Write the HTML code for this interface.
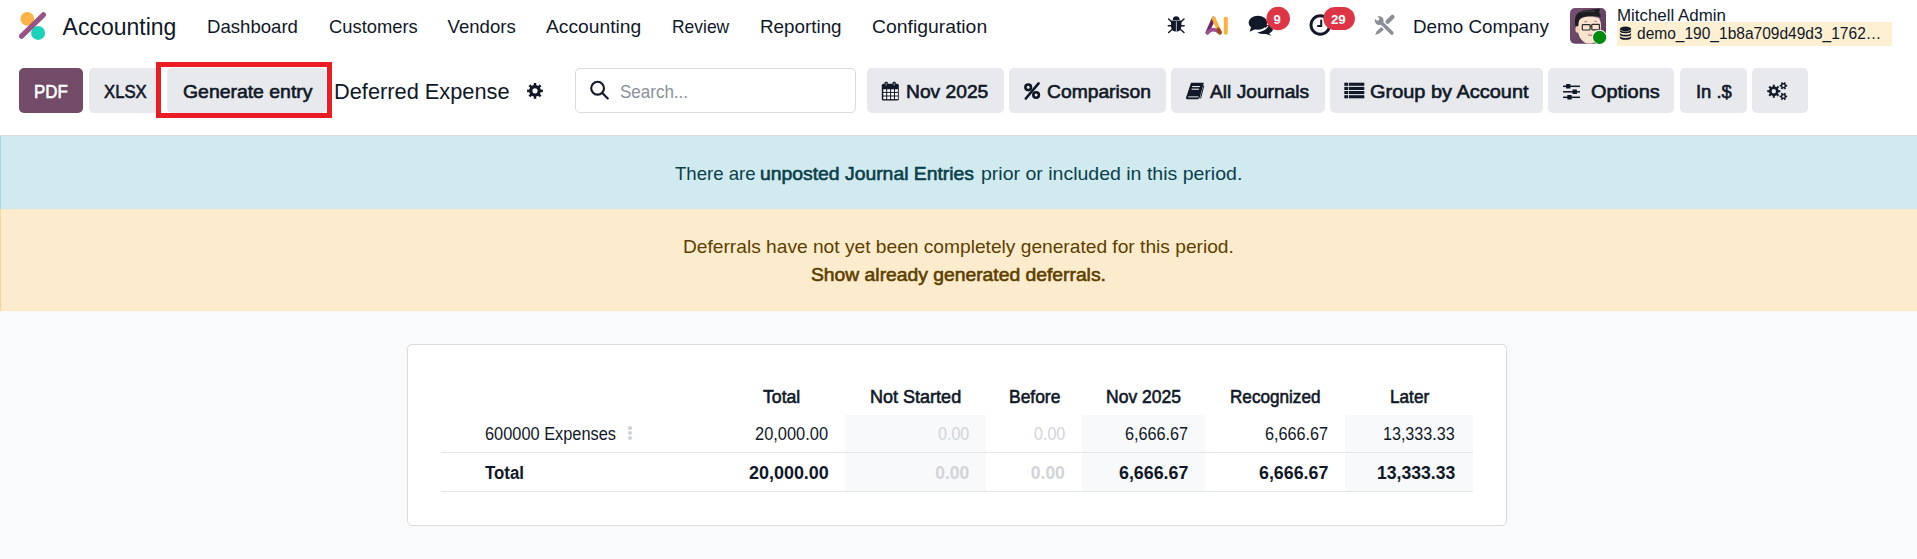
<!DOCTYPE html>
<html><head><meta charset="utf-8"><style>
html,body{margin:0;padding:0;width:1917px;height:559px;overflow:hidden;background:#fff;}
body{position:relative;font-family:"Liberation Sans",sans-serif;}
.bg{position:absolute;}
.t{position:absolute;white-space:nowrap;line-height:1;transform-origin:0 0;}
svg.bg{overflow:visible}
</style></head><body>
<div class="bg" style="left:0;top:0;width:1917px;height:135px;background:#fff"></div>
<div class="bg" style="left:0;top:135px;width:1917px;height:1px;background:#d8dadd"></div>
<div class="bg" style="left:0;top:136px;width:1917px;height:73px;background:#d1eaf0;border-left:1px solid #a2d8e3;box-sizing:border-box"></div>
<div class="bg" style="left:0;top:209px;width:1917px;height:102px;background:#fcebcc;border-left:1px solid #f5d79a;box-sizing:border-box"></div>
<div class="bg" style="left:0;top:311px;width:1917px;height:248px;background:#f9fafb"></div>
<div class="bg" style="left:1px;top:208px;width:1916px;height:1px;background:#cbe9f2"></div>
<div class="bg" style="left:1px;top:209px;width:1916px;height:1px;background:#fde8c6"></div>
<div class="bg" style="left:1px;top:310px;width:1916px;height:1px;background:#fde8c6"></div>
<svg class="bg" style="left:0;top:0" width="60" height="50" viewBox="0 0 60 50">
<circle cx="27.3" cy="18.8" r="6.9" fill="#fbb445"/>
<circle cx="38.1" cy="32.9" r="7" fill="#1ad3bb"/>
<line x1="21.6" y1="36.2" x2="43.4" y2="14.8" stroke="#93497f" stroke-width="5.2" stroke-linecap="round" opacity="0.95"/>
</svg>
<div class="t" style="left:62.60px;top:16.33px;font-size:23px;color:#111827;">Accounting</div>
<div class="t" style="left:207.00px;top:17.85px;font-size:18.6px;color:#111827;">Dashboard</div>
<div class="t" style="left:328.60px;top:17.85px;font-size:18.6px;color:#111827;transform:scaleX(0.9875);">Customers</div>
<div class="t" style="left:447.50px;top:17.85px;font-size:18.6px;color:#111827;">Vendors</div>
<div class="t" style="left:545.50px;top:17.85px;font-size:18.6px;color:#111827;transform:scaleX(1.0344);">Accounting</div>
<div class="t" style="left:672.00px;top:17.85px;font-size:18.6px;color:#111827;transform:scaleX(0.9379);">Review</div>
<div class="t" style="left:759.70px;top:17.85px;font-size:18.6px;color:#111827;transform:scaleX(1.0118);">Reporting</div>
<div class="t" style="left:872.00px;top:17.85px;font-size:18.6px;color:#111827;transform:scaleX(1.0412);">Configuration</div>
<div class="t" style="left:1413.20px;top:18.15px;font-size:18.6px;color:#111827;transform:scaleX(1.0120);">Demo Company</div>
<div class="t" style="left:1617.40px;top:8.08px;font-size:16.8px;color:#111827;transform:scaleX(1.0064);">Mitchell Admin</div>
<div class="bg" style="left:1617px;top:22px;width:275px;height:23.5px;background:#fcefd2"></div>
<div class="t" style="left:1636.70px;top:26.25px;font-size:16px;color:#111827;transform:scaleX(0.9702);">demo_190_1b8a709d49d3_1762…</div>
<div class="bg" style="left:19px;top:68px;width:64px;height:45px;background:#714b67;border-radius:5px"></div>
<div class="bg" style="left:89px;top:68px;width:72px;height:45px;background:#e7e9ed;border-radius:5px"></div>
<div class="bg" style="left:167px;top:68px;width:159px;height:45px;background:#e7e9ed;border-radius:5px"></div>
<div class="bg" style="left:867px;top:68px;width:137px;height:45px;background:#e7e9ed;border-radius:5px"></div>
<div class="bg" style="left:1009px;top:68px;width:157px;height:45px;background:#e7e9ed;border-radius:5px"></div>
<div class="bg" style="left:1171px;top:68px;width:154px;height:45px;background:#e7e9ed;border-radius:5px"></div>
<div class="bg" style="left:1330px;top:68px;width:213px;height:45px;background:#e7e9ed;border-radius:5px"></div>
<div class="bg" style="left:1548px;top:68px;width:126px;height:45px;background:#e7e9ed;border-radius:5px"></div>
<div class="bg" style="left:1680px;top:68px;width:67px;height:45px;background:#e7e9ed;border-radius:5px"></div>
<div class="bg" style="left:1752px;top:68px;width:56px;height:45px;background:#e7e9ed;border-radius:5px"></div>
<div class="bg" style="left:156px;top:62px;width:176px;height:56px;border:5px solid #ec1c24;box-sizing:border-box"></div>
<div class="t" style="left:33.50px;top:82.95px;font-size:18.6px;-webkit-text-stroke:0.6px #ffffff;color:#ffffff;transform:scaleX(0.9086);">PDF</div>
<div class="t" style="left:104.10px;top:82.75px;font-size:18.6px;-webkit-text-stroke:0.6px #111827;color:#111827;transform:scaleX(0.8998);">XLSX</div>
<div class="t" style="left:183.10px;top:82.95px;font-size:18.6px;-webkit-text-stroke:0.6px #111827;color:#111827;transform:scaleX(1.0437);">Generate entry</div>
<div class="t" style="left:334.40px;top:80.65px;font-size:22.5px;color:#111827;transform:scaleX(0.9683);">Deferred Expense</div>
<div class="bg" style="left:575px;top:68px;width:281px;height:45px;border:1px solid #d8dadd;border-radius:5px;box-sizing:border-box;background:#fff"></div>
<div class="t" style="left:620.00px;top:83.04px;font-size:18.5px;color:#8b919b;transform:scaleX(0.9185);">Search...</div>
<div class="t" style="left:905.90px;top:83.15px;font-size:18.6px;-webkit-text-stroke:0.6px #111827;color:#111827;transform:scaleX(1.0336);">Nov 2025</div>
<div class="t" style="left:1046.60px;top:83.15px;font-size:18.6px;-webkit-text-stroke:0.6px #111827;color:#111827;transform:scaleX(1.0361);">Comparison</div>
<div class="t" style="left:1210.00px;top:83.15px;font-size:18.6px;-webkit-text-stroke:0.6px #111827;color:#111827;transform:scaleX(1.0318);">All Journals</div>
<div class="t" style="left:1369.70px;top:83.15px;font-size:18.6px;-webkit-text-stroke:0.6px #111827;color:#111827;transform:scaleX(1.0726);">Group by Account</div>
<div class="t" style="left:1590.80px;top:83.15px;font-size:18.6px;-webkit-text-stroke:0.6px #111827;color:#111827;transform:scaleX(1.0717);">Options</div>
<div class="t" style="left:1695.60px;top:83.15px;font-size:18.6px;-webkit-text-stroke:0.6px #111827;color:#111827;transform:scaleX(0.9892);">In .$</div>
<div class="t" style="left:675.00px;top:165.05px;font-size:18.6px;color:#0a4049;">There are </div>
<div class="t" style="left:759.80px;top:165.05px;font-size:18.6px;-webkit-text-stroke:0.6px #0a4049;color:#0a4049;transform:scaleX(1.0405);">unposted Journal Entries</div>
<div class="t" style="left:981.10px;top:165.05px;font-size:18.6px;color:#0a4049;transform:scaleX(1.0491);">prior or included in this period.</div>
<div class="t" style="left:683.00px;top:238.05px;font-size:18.6px;color:#5c3f00;transform:scaleX(1.0308);">Deferrals have not yet been completely generated for this period.</div>
<div class="t" style="left:810.70px;top:266.45px;font-size:18.6px;-webkit-text-stroke:0.6px #5c3f00;color:#5c3f00;transform:scaleX(1.0375);">Show already generated deferrals.</div>
<div class="bg" style="left:407px;top:344px;width:1100px;height:182px;background:#fff;border:1px solid #d8dadd;border-radius:5px;box-sizing:border-box"></div>
<div class="bg" style="left:845px;top:415px;width:141px;height:76px;background:#f8f9fa"></div>
<div class="bg" style="left:1082px;top:415px;width:123px;height:76px;background:#f8f9fa"></div>
<div class="bg" style="left:1345px;top:415px;width:128px;height:76px;background:#f8f9fa"></div>
<div class="bg" style="left:441px;top:452px;width:1032px;height:1px;background:#e2e5e9"></div>
<div class="bg" style="left:441px;top:491px;width:1032px;height:1px;background:#e2e5e9"></div>
<div class="t" style="left:763.35px;top:387.85px;font-size:18.6px;-webkit-text-stroke:0.6px #111827;color:#111827;transform:scaleX(0.9494);">Total</div>
<div class="t" style="left:870.40px;top:387.85px;font-size:18.6px;-webkit-text-stroke:0.6px #111827;color:#111827;transform:scaleX(0.9694);">Not Started</div>
<div class="t" style="left:1008.60px;top:387.85px;font-size:18.6px;-webkit-text-stroke:0.6px #111827;color:#111827;transform:scaleX(0.9379);">Before</div>
<div class="t" style="left:1106.30px;top:387.85px;font-size:18.6px;-webkit-text-stroke:0.6px #111827;color:#111827;transform:scaleX(0.9419);">Nov 2025</div>
<div class="t" style="left:1230.25px;top:387.85px;font-size:18.6px;-webkit-text-stroke:0.6px #111827;color:#111827;transform:scaleX(0.9213);">Recognized</div>
<div class="t" style="left:1390.00px;top:387.85px;font-size:18.6px;-webkit-text-stroke:0.6px #111827;color:#111827;transform:scaleX(0.9246);">Later</div>
<div class="t" style="left:485.40px;top:425.98px;font-size:17.5px;color:#111827;transform:scaleX(0.9349);">600000 Expenses</div>
<svg class="bg" style="left:0;top:0" width="1917" height="559"><g fill="#ced2d8"><circle cx="630" cy="427.9" r="2"/><circle cx="630" cy="432.9" r="2"/><circle cx="630" cy="437.9" r="2"/></g></svg>
<div class="t" style="left:485.40px;top:464.68px;font-size:17.5px;font-weight:700;color:#111827;transform:scaleX(0.9629);">Total</div>
<div class="t" style="left:755.40px;top:425.98px;font-size:17.5px;color:#111827;transform:scaleX(0.9389);">20,000.00</div>
<div class="t" style="left:938.10px;top:425.98px;font-size:17.5px;color:#d1d4d9;transform:scaleX(0.9189);">0.00</div>
<div class="t" style="left:1033.70px;top:425.98px;font-size:17.5px;color:#d1d4d9;transform:scaleX(0.9189);">0.00</div>
<div class="t" style="left:1124.90px;top:425.98px;font-size:17.5px;color:#111827;transform:scaleX(0.9263);">6,666.67</div>
<div class="t" style="left:1265.40px;top:425.98px;font-size:17.5px;color:#111827;transform:scaleX(0.9263);">6,666.67</div>
<div class="t" style="left:1383.40px;top:425.98px;font-size:17.5px;color:#111827;transform:scaleX(0.9197);">13,333.33</div>
<div class="t" style="left:748.70px;top:464.68px;font-size:17.5px;font-weight:700;color:#111827;transform:scaleX(1.0250);">20,000.00</div>
<div class="t" style="left:935.20px;top:464.68px;font-size:17.5px;font-weight:700;color:#d1d4d9;">0.00</div>
<div class="t" style="left:1030.80px;top:464.68px;font-size:17.5px;font-weight:700;color:#d1d4d9;">0.00</div>
<div class="t" style="left:1118.60px;top:464.68px;font-size:17.5px;font-weight:700;color:#111827;transform:scaleX(1.0188);">6,666.67</div>
<div class="t" style="left:1259.10px;top:464.68px;font-size:17.5px;font-weight:700;color:#111827;transform:scaleX(1.0188);">6,666.67</div>
<div class="t" style="left:1376.70px;top:464.68px;font-size:17.5px;font-weight:700;color:#111827;transform:scaleX(1.0057);">13,333.33</div>
<svg class="bg" style="left:0;top:0" width="1917" height="559" viewBox="0 0 1917 559"><g fill="#111827">
<path d="M1172.8,19.9 A3.4,3.6 0 0 1 1179.6,19.9 Z"/>
<path d="M1171,20.6 H1181.4 V26 Q1181.4,31.5 1176.2,31.6 Q1171,31.5 1171,26 Z"/>
</g>
<rect x="1175.9" y="21.3" width="0.75" height="9.8" fill="#e8eaee"/>
<g stroke="#111827" stroke-width="1.4" stroke-linecap="round">
<line x1="1168.6" y1="19" x2="1171.8" y2="22"/><line x1="1184" y1="19" x2="1180.8" y2="22"/>
<line x1="1168.3" y1="25.7" x2="1171.5" y2="25.7"/><line x1="1184.2" y1="25.7" x2="1181" y2="25.7"/>
<line x1="1168.6" y1="32.6" x2="1172" y2="29.6"/><line x1="1184" y1="32.6" x2="1180.6" y2="29.6"/>
</g>
<g stroke-linecap="round" fill="none" stroke-width="3.8">
<line x1="1213.6" y1="18.4" x2="1207.4" y2="32.5" stroke="#6f2864"/>
<path d="M1207.4,32.6 Q1213.5,26.5 1219.6,32.6" stroke="#9b5190"/>
<line x1="1213.6" y1="18.4" x2="1220" y2="32.5" stroke="#fbb13c"/>
<line x1="1218.2" y1="29.5" x2="1220" y2="32.5" stroke="#a0421c"/>
<line x1="1225.8" y1="18.6" x2="1225.8" y2="32.8" stroke="#fbb13c" stroke-width="4.0"/>
</g>
<path fill="#111827" d="M1262,25 Q1272,24 1273,29 Q1273,32 1269,33.4 L1271.6,35.8 L1266,34 Q1260,34.5 1257.5,32.5 Q1263,31.5 1266,28 Z"/>
<ellipse cx="1257.9" cy="22.8" rx="9.3" ry="7" fill="#111827"/>
<path fill="#111827" d="M1251,27 L1249.8,31.8 L1255.5,29 Z"/>
<path fill="none" stroke="#fff" stroke-width="1.1" d="M1257,31 Q1265,31 1268,26"/>
<circle cx="1278.2" cy="18.5" r="11.8" fill="#dd3545"/>
<circle cx="1320.3" cy="25" r="9.3" fill="none" stroke="#111827" stroke-width="2.9"/>
<path d="M1321.2,19.8 V26 H1317.2" fill="none" stroke="#111827" stroke-width="2"/>
<rect x="1323.4" y="6.9" width="31.5" height="23.2" rx="11.6" fill="#dd3545"/>
<g fill="#8a8e96" stroke="none">
<circle cx="1379.2" cy="20.6" r="4.4"/>
<line x1="1381.4" y1="22.8" x2="1391.9" y2="33.1" stroke="#8a8e96" stroke-width="3.5" stroke-linecap="round"/>
<line x1="1387.6" y1="21.7" x2="1392.4" y2="16.9" stroke="#8a8e96" stroke-width="4.3" stroke-linecap="round"/>
<path d="M1381.2,27.1 L1383.9,29.8 L1379.2,33.6 L1375.2,35.1 L1376.6,31.4 Z"/>
</g>
<path d="M1376.2,15.2 L1379.4,18.4 L1378.9,20.3 L1377,20.8 L1373.8,17.6 Z" fill="#fff"/>
<defs><clipPath id="av"><rect x="1570" y="8" width="36" height="35.8" rx="5"/></clipPath>
<linearGradient id="avg" x1="0" y1="0" x2="1" y2="1"><stop offset="0" stop-color="#775172"/><stop offset="1" stop-color="#5b3b58"/></linearGradient></defs>
<g clip-path="url(#av)">
<rect x="1570" y="8" width="36" height="36" fill="url(#avg)"/>
<path d="M1577.5,22 Q1577,17 1583,16.5 Q1592,15.5 1599,18 Q1601.5,22 1600.8,29 Q1600,38 1594,42.5 Q1589,45 1584.5,42.5 Q1579,38.5 1578,32 Z" fill="#f9e3cf"/>
<ellipse cx="1577.6" cy="29.5" rx="2.2" ry="3.2" fill="#f3d2b8"/>
<path d="M1575.2,26 Q1574,18 1577,14 Q1581,10 1589,10 Q1595,9.6 1599.6,8.6 Q1600.2,11 1599,12.5 Q1601,13.5 1600.6,17 Q1594,15.6 1587,16.4 Q1581.5,17 1579.4,20 Q1578.3,22.5 1578.4,26 Z" fill="#1d1d20"/>
<path d="M1580,12.4 Q1587,10.6 1595,11.6" stroke="#4a4a4e" stroke-width="0.8" fill="none"/>
<g fill="none" stroke="#2b2b2b" stroke-width="1.2"><rect x="1582.3" y="24.6" width="7.8" height="5.4" rx="0.7"/><rect x="1591.8" y="24.4" width="7.6" height="5.4" rx="0.7"/><line x1="1590.1" y1="26.4" x2="1591.8" y2="26.4"/></g>
<g stroke="#7d6a60" stroke-width="0.8"><line x1="1584.4" y1="21.9" x2="1587.3" y2="21.3"/><line x1="1594.3" y1="21" x2="1597" y2="21.6"/></g>
<path d="M1588,34.7 Q1590.5,36 1592.5,35" stroke="#a0504a" stroke-width="0.9" fill="none"/>
</g>
<circle cx="1599.6" cy="37.3" r="7.5" fill="#fff"/>
<circle cx="1599.6" cy="37.3" r="6.6" fill="#008a10"/>
<g fill="#111827">
<ellipse cx="1625.5" cy="28.9" rx="5.6" ry="2.3"/>
<path d="M1619.9,29.5 V31 Q1619.9,33.2 1625.5,33.2 Q1631.1,33.2 1631.1,31 V29.5 Q1631.1,31.6 1625.5,31.6 Q1619.9,31.6 1619.9,29.5 Z"/>
<path d="M1619.9,32.4 V34.2 Q1619.9,36.4 1625.5,36.4 Q1631.1,36.4 1631.1,34.2 V32.4 Q1631.1,34.8 1625.5,34.8 Q1619.9,34.8 1619.9,32.4 Z"/>
<path d="M1619.9,35.6 V37.4 Q1619.9,39.7 1625.5,39.7 Q1631.1,39.7 1631.1,37.4 V35.6 Q1631.1,38 1625.5,38 Q1619.9,38 1619.9,35.6 Z"/>
</g>
<path fill-rule="evenodd" fill="#111827" d="M540.49,88.65 L540.79,89.65 L542.89,89.47 L542.89,92.13 L540.79,91.95 L540.41,93.16 L539.91,94.08 L541.52,95.44 L539.64,97.32 L538.28,95.71 L537.15,96.29 L536.15,96.59 L536.33,98.69 L533.67,98.69 L533.85,96.59 L532.64,96.21 L531.72,95.71 L530.36,97.32 L528.48,95.44 L530.09,94.08 L529.51,92.95 L529.21,91.95 L527.11,92.13 L527.11,89.47 L529.21,89.65 L529.59,88.44 L530.09,87.52 L528.48,86.16 L530.36,84.28 L531.72,85.89 L532.85,85.31 L533.85,85.01 L533.67,82.91 L536.33,82.91 L536.15,85.01 L537.36,85.39 L538.28,85.89 L539.64,84.28 L541.52,86.16 L539.91,87.52 Z M537.60,90.80 A2.6,2.6 0 1 0 532.40,90.80 A2.6,2.6 0 1 0 537.60,90.80 Z"/>
<circle cx="597.6" cy="88.2" r="6.4" fill="none" stroke="#111827" stroke-width="2.1"/>
<line x1="602.3" y1="93" x2="607.8" y2="98.4" stroke="#111827" stroke-width="2.1" stroke-linecap="round"/>
<rect x="881.8" y="83.8" width="17" height="16.7" rx="1.5" fill="#111827"/>
<g fill="#fff"><rect x="883.30" y="89.30" width="2.9" height="2.6"/><rect x="883.30" y="92.90" width="2.9" height="2.6"/><rect x="883.30" y="96.50" width="2.9" height="2.6"/><rect x="887.20" y="89.30" width="2.9" height="2.6"/><rect x="887.20" y="92.90" width="2.9" height="2.6"/><rect x="887.20" y="96.50" width="2.9" height="2.6"/><rect x="891.10" y="89.30" width="2.9" height="2.6"/><rect x="891.10" y="92.90" width="2.9" height="2.6"/><rect x="891.10" y="96.50" width="2.9" height="2.6"/><rect x="895.00" y="89.30" width="2.9" height="2.6"/><rect x="895.00" y="92.90" width="2.9" height="2.6"/><rect x="895.00" y="96.50" width="2.9" height="2.6"/></g>
<rect x="884.6" y="81.8" width="3.2" height="4.5" rx="1.2" fill="#111827"/><rect x="892.6" y="81.8" width="3.2" height="4.5" rx="1.2" fill="#111827"/>
<rect x="885.7" y="83" width="1" height="2.6" fill="#fff" opacity="0.6"/><rect x="893.7" y="83" width="1" height="2.6" fill="#fff" opacity="0.6"/>
<g fill="none" stroke="#111827" stroke-width="2.6"><circle cx="1028.2" cy="87.3" r="2.8"/><circle cx="1036.1" cy="95" r="2.8"/></g>
<line x1="1025.8" y1="98.5" x2="1038.6" y2="83.4" stroke="#111827" stroke-width="2.6" stroke-linecap="round"/>
<path d="M1191,82.8 H1203.8 L1199.8,97.5 Q1199.3,99.3 1197.5,99.3 H1187.2 Q1185.6,99.3 1186.1,97.5 Z" fill="#111827"/>
<path d="M1188.2,96.9 H1198.6" stroke="#fff" stroke-width="0.9"/>
<path d="M1192.2,86.6 H1199.8 M1191.5,89.2 H1199" stroke="#fff" stroke-width="1"/>
<path d="M1203.8,85.5 L1200.6,98.4" stroke="#111827" stroke-width="1"/>
<g fill="#111827"><rect x="1344.3" y="82.7" width="3.7" height="3.1"/><rect x="1348.8" y="82.7" width="15.5" height="3.1"/><rect x="1344.3" y="86.9" width="3.7" height="3.1"/><rect x="1348.8" y="86.9" width="15.5" height="3.1"/><rect x="1344.3" y="91.0" width="3.7" height="3.1"/><rect x="1348.8" y="91.0" width="15.5" height="3.1"/><rect x="1344.3" y="95.2" width="3.7" height="3.1"/><rect x="1348.8" y="95.2" width="15.5" height="3.1"/></g>
<g stroke="#111827" stroke-width="1.5"><line x1="1563" y1="86.3" x2="1580" y2="86.3"/><line x1="1563" y1="91.8" x2="1580" y2="91.8"/><line x1="1563" y1="97.3" x2="1580" y2="97.3"/></g>
<g fill="#111827"><rect x="1566" y="84.1" width="4.4" height="4.5" rx="0.4"/><rect x="1572.5" y="89.6" width="4.4" height="4.5" rx="0.4"/><rect x="1567.3" y="95.1" width="4.4" height="4.5" rx="0.4"/></g>
<path fill-rule="evenodd" fill="#111827" d="M1778.27,89.45 L1778.51,90.26 L1780.31,90.10 L1780.31,92.30 L1778.51,92.14 L1778.20,93.12 L1777.79,93.87 L1779.18,95.03 L1777.63,96.58 L1776.47,95.19 L1775.55,95.67 L1774.74,95.91 L1774.90,97.71 L1772.70,97.71 L1772.86,95.91 L1771.88,95.60 L1771.13,95.19 L1769.97,96.58 L1768.42,95.03 L1769.81,93.87 L1769.33,92.95 L1769.09,92.14 L1767.29,92.30 L1767.29,90.10 L1769.09,90.26 L1769.40,89.28 L1769.81,88.53 L1768.42,87.37 L1769.97,85.82 L1771.13,87.21 L1772.05,86.73 L1772.86,86.49 L1772.70,84.69 L1774.90,84.69 L1774.74,86.49 L1775.72,86.80 L1776.47,87.21 L1777.63,85.82 L1779.18,87.37 L1777.79,88.53 Z M1776.00,91.20 A2.2,2.2 0 1 0 1771.60,91.20 A2.2,2.2 0 1 0 1776.00,91.20 Z"/>
<path fill-rule="evenodd" fill="#111827" d="M1785.77,84.41 L1785.99,84.93 L1787.18,84.75 L1787.18,86.65 L1785.99,86.47 L1785.70,87.11 L1785.36,87.56 L1786.11,88.50 L1784.47,89.45 L1784.03,88.33 L1783.33,88.40 L1782.77,88.33 L1782.33,89.45 L1780.69,88.50 L1781.44,87.56 L1781.03,86.99 L1780.81,86.47 L1779.62,86.65 L1779.62,84.75 L1780.81,84.93 L1781.10,84.29 L1781.44,83.84 L1780.69,82.90 L1782.33,81.95 L1782.77,83.07 L1783.47,83.00 L1784.03,83.07 L1784.47,81.95 L1786.11,82.90 L1785.36,83.84 Z M1784.60,85.70 A1.2,1.2 0 1 0 1782.20,85.70 A1.2,1.2 0 1 0 1784.60,85.70 Z"/>
<path fill-rule="evenodd" fill="#111827" d="M1785.77,95.11 L1785.99,95.63 L1787.18,95.45 L1787.18,97.35 L1785.99,97.17 L1785.70,97.81 L1785.36,98.26 L1786.11,99.20 L1784.47,100.15 L1784.03,99.03 L1783.33,99.10 L1782.77,99.03 L1782.33,100.15 L1780.69,99.20 L1781.44,98.26 L1781.03,97.69 L1780.81,97.17 L1779.62,97.35 L1779.62,95.45 L1780.81,95.63 L1781.10,94.99 L1781.44,94.54 L1780.69,93.60 L1782.33,92.65 L1782.77,93.77 L1783.47,93.70 L1784.03,93.77 L1784.47,92.65 L1786.11,93.60 L1785.36,94.54 Z M1784.60,96.40 A1.2,1.2 0 1 0 1782.20,96.40 A1.2,1.2 0 1 0 1784.60,96.40 Z"/></svg><div class="t" style="left:1273.6px;top:13.3px;font-size:13px;font-weight:700;color:#fff">9</div>
<div class="t" style="left:1331.4px;top:13.3px;font-size:13px;font-weight:700;color:#fff;transform:scaleX(1.02)">29</div>
</body></html>
